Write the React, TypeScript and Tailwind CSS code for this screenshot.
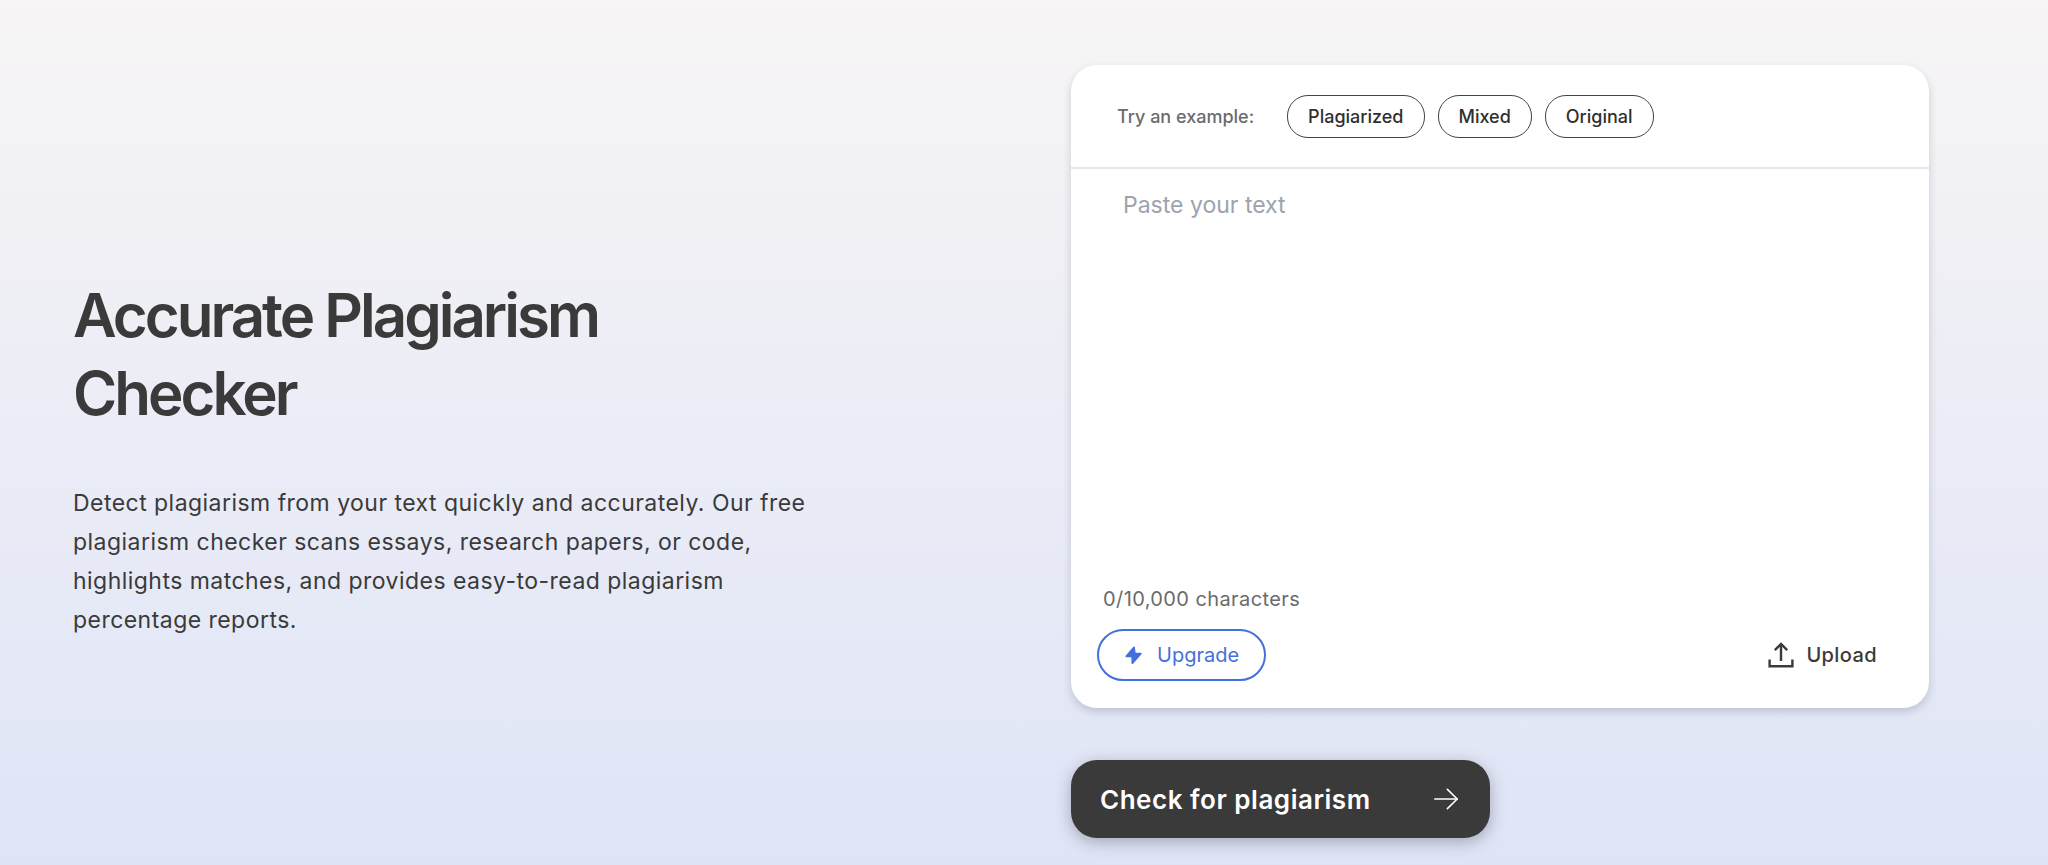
import { useState } from 'react'

const MAX_CHARS = 10000

const examples = [
    {
        label: 'Plagiarized',
        text: 'To be, or not to be, that is the question: whether tis nobler in the mind to suffer the slings and arrows of outrageous fortune.'
    },
    {
        label: 'Mixed',
        text: 'Hamlet wonders whether it is better to live or die. To be, or not to be, that is the question.'
    },
    {
        label: 'Original',
        text: 'My neighbour paints her fence a new colour every spring, and nobody on our street has ever asked her why.'
    }
]

function BoltIcon() {
    return (
        <svg className="h-5 w-5" viewBox="0 0 20 20" fill="currentColor" aria-hidden="true">
            <path
                d="M10 2.3 2.3 11.4h5.9L8.4 18.2 16.8 8.7h-6L10 2.3Z"
                stroke="currentColor"
                strokeWidth={1.8}
                strokeLinejoin="round"
            />
        </svg>
    )
}

function UploadIcon() {
    return (
        <svg className="h-[26px] w-[26px]" viewBox="0 0 26 26" fill="none" stroke="currentColor" strokeWidth={2.4} aria-hidden="true">
            <path d="M1.6 17.5v6.7h22.8v-6.7" />
            <path d="M13 19V2" />
            <path d="M6.8 8.2 13 2l6.2 6.2" />
        </svg>
    )
}

function ArrowIcon() {
    return (
        <svg
            className="h-6 w-6"
            viewBox="0 0 24 24"
            fill="none"
            stroke="currentColor"
            strokeWidth={1.6}
            strokeLinecap="round"
            strokeLinejoin="round"
            aria-hidden="true"
        >
            <path d="M0.8 12h22.4" />
            <path d="M13.4 2.4 23.2 12l-9.8 9.6" />
        </svg>
    )
}

export default function App() {
    const [text, setText] = useState('')

    return (
        <main className="min-h-screen bg-linear-to-b from-[#f7f5f5] via-[#ebecf6] to-[#dfe5f6] pt-[65px] pr-[119px] pb-[26px] pl-[73px] font-['Inter',sans-serif] text-[#3a3a3a]">
            <div className="grid grid-cols-[998fr_858fr] items-center">
                <section className="max-w-[740px] pt-3">
                    <h1 className="text-[60px] leading-[78px] font-semibold tracking-tighter">Accurate Plagiarism Checker</h1>
                    <p className="mt-[52px] text-[23px] leading-[39px] tracking-[0.02em]">
                        Detect plagiarism from your text quickly and accurately. Our free plagiarism checker scans essays, research
                        papers, or code, highlights matches, and provides easy-to-read plagiarism percentage reports.
                    </p>
                </section>

                <section>
                    <div className="rounded-[26px] bg-white shadow-[0_4px_8px_rgba(50,50,70,0.2)]">
                        <div className="flex items-center border-b-2 border-[#e5e6ec] px-[46px] pt-[30px] pb-[29px] text-lg font-medium">
                            <span className="mr-[33px] text-[#6b6b6b]">Try an example:</span>
                            <div className="flex gap-[13px]">
                                {examples.map((example) => (
                                    <button
                                        key={example.label}
                                        type="button"
                                        onClick={() => setText(example.text)}
                                        className="h-[43px] rounded-[21px] border border-[#444444] px-5 text-[#2f2f2f]"
                                    >
                                        {example.label}
                                    </button>
                                ))}
                            </div>
                        </div>

                        <textarea
                            aria-label="Text to check"
                            placeholder="Paste your text"
                            maxLength={MAX_CHARS}
                            value={text}
                            onChange={(e) => setText(e.target.value)}
                            className="block h-[413px] w-full resize-none px-[52px] py-[20px] text-[23px] leading-8 outline-none placeholder:text-[#9ca3af]"
                        />

                        <div className="px-[26px] pb-[27px] text-xl">
                            <p className="px-[6px] leading-[34px] tracking-[0.02em] text-[#6b6b6b]">
                                {text.length}/{MAX_CHARS.toLocaleString('en-US')} characters
                            </p>
                            <div className="mt-[13px] flex items-center justify-between">
                                <button
                                    type="button"
                                    className="flex h-[52px] items-center gap-[13px] rounded-full border-2 border-[#4370dd] px-[25px] text-[#4370dd]"
                                >
                                    <BoltIcon />
                                    Upgrade
                                </button>
                                <button type="button" className="flex items-center gap-3 px-[26px] font-medium tracking-[0.02em]">
                                    <UploadIcon />
                                    Upload
                                </button>
                            </div>
                        </div>
                    </div>

                    <button
                        type="button"
                        className="mt-[52px] flex h-[78px] w-[419px] items-center justify-between rounded-[26px] bg-[#3a3a3a] pr-8 pl-[29px] text-[26px] font-semibold tracking-[0.02em] text-white shadow-[0_4px_16px_rgba(50,50,70,0.35)]"
                    >
                        Check for plagiarism
                        <ArrowIcon />
                    </button>
                </section>
            </div>
        </main>
    )
}
